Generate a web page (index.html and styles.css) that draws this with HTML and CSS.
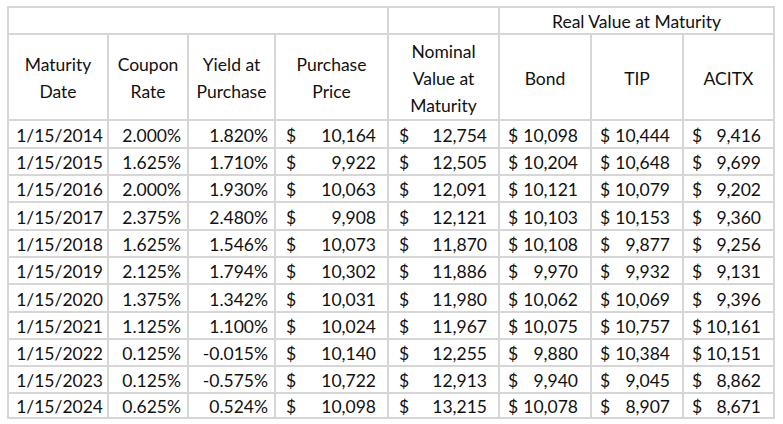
FILE: index.html
```html
<!DOCTYPE html>
<html>
<head>
<meta charset="utf-8">
<link rel="stylesheet" href="styles.css">
</head>
<body>
<div class="sheet">
  <div class="c span4"></div>
  <div class="c"></div>
  <div class="c span3 hd">Real Value at Maturity</div>

  <div class="c hd">Maturity<br>Date</div>
  <div class="c hd">Coupon<br>Rate</div>
  <div class="c hd">Yield at<br>Purchase</div>
  <div class="c hd">Purchase<br>Price</div>
  <div class="c hd">Nominal<br>Value at<br>Maturity</div>
  <div class="c hd">Bond</div>
  <div class="c hd">TIP</div>
  <div class="c hd">ACITX</div>

  <div class="c r d">1/15/2014</div><div class="c r">2.000%</div><div class="c r">1.820%</div><div class="c acc"><span>$</span><span>10,164</span></div><div class="c acc"><span>$</span><span>12,754</span></div><div class="c acc tight"><span>$</span><span>10,098</span></div><div class="c acc tight"><span>$</span><span>10,444</span></div><div class="c acc tight"><span>$</span><span>9,416</span></div>
  <div class="c r d">1/15/2015</div><div class="c r">1.625%</div><div class="c r">1.710%</div><div class="c acc"><span>$</span><span>9,922</span></div><div class="c acc"><span>$</span><span>12,505</span></div><div class="c acc tight"><span>$</span><span>10,204</span></div><div class="c acc tight"><span>$</span><span>10,648</span></div><div class="c acc tight"><span>$</span><span>9,699</span></div>
  <div class="c r d">1/15/2016</div><div class="c r">2.000%</div><div class="c r">1.930%</div><div class="c acc"><span>$</span><span>10,063</span></div><div class="c acc"><span>$</span><span>12,091</span></div><div class="c acc tight"><span>$</span><span>10,121</span></div><div class="c acc tight"><span>$</span><span>10,079</span></div><div class="c acc tight"><span>$</span><span>9,202</span></div>
  <div class="c r d">1/15/2017</div><div class="c r">2.375%</div><div class="c r">2.480%</div><div class="c acc"><span>$</span><span>9,908</span></div><div class="c acc"><span>$</span><span>12,121</span></div><div class="c acc tight"><span>$</span><span>10,103</span></div><div class="c acc tight"><span>$</span><span>10,153</span></div><div class="c acc tight"><span>$</span><span>9,360</span></div>
  <div class="c r d">1/15/2018</div><div class="c r">1.625%</div><div class="c r">1.546%</div><div class="c acc"><span>$</span><span>10,073</span></div><div class="c acc"><span>$</span><span>11,870</span></div><div class="c acc tight"><span>$</span><span>10,108</span></div><div class="c acc tight"><span>$</span><span>9,877</span></div><div class="c acc tight"><span>$</span><span>9,256</span></div>
  <div class="c r d">1/15/2019</div><div class="c r">2.125%</div><div class="c r">1.794%</div><div class="c acc"><span>$</span><span>10,302</span></div><div class="c acc"><span>$</span><span>11,886</span></div><div class="c acc tight"><span>$</span><span>9,970</span></div><div class="c acc tight"><span>$</span><span>9,932</span></div><div class="c acc tight"><span>$</span><span>9,131</span></div>
  <div class="c r d">1/15/2020</div><div class="c r">1.375%</div><div class="c r">1.342%</div><div class="c acc"><span>$</span><span>10,031</span></div><div class="c acc"><span>$</span><span>11,980</span></div><div class="c acc tight"><span>$</span><span>10,062</span></div><div class="c acc tight"><span>$</span><span>10,069</span></div><div class="c acc tight"><span>$</span><span>9,396</span></div>
  <div class="c r d">1/15/2021</div><div class="c r">1.125%</div><div class="c r">1.100%</div><div class="c acc"><span>$</span><span>10,024</span></div><div class="c acc"><span>$</span><span>11,967</span></div><div class="c acc tight"><span>$</span><span>10,075</span></div><div class="c acc tight"><span>$</span><span>10,757</span></div><div class="c acc tight"><span>$</span><span>10,161</span></div>
  <div class="c r d">1/15/2022</div><div class="c r">0.125%</div><div class="c r">-0.015%</div><div class="c acc"><span>$</span><span>10,140</span></div><div class="c acc"><span>$</span><span>12,255</span></div><div class="c acc tight"><span>$</span><span>9,880</span></div><div class="c acc tight"><span>$</span><span>10,384</span></div><div class="c acc tight"><span>$</span><span>10,151</span></div>
  <div class="c r d">1/15/2023</div><div class="c r">0.125%</div><div class="c r">-0.575%</div><div class="c acc"><span>$</span><span>10,722</span></div><div class="c acc"><span>$</span><span>12,913</span></div><div class="c acc tight"><span>$</span><span>9,940</span></div><div class="c acc tight"><span>$</span><span>9,045</span></div><div class="c acc tight"><span>$</span><span>8,862</span></div>
  <div class="c r d">1/15/2024</div><div class="c r">0.625%</div><div class="c r">0.524%</div><div class="c acc"><span>$</span><span>10,098</span></div><div class="c acc"><span>$</span><span>13,215</span></div><div class="c acc tight"><span>$</span><span>10,078</span></div><div class="c acc tight"><span>$</span><span>8,907</span></div><div class="c acc tight"><span>$</span><span>8,671</span></div>
</div>
</body>
</html>
```
FILE: styles.css
```css
html, body {
  margin: 0;
  padding: 0;
  background: #ffffff;
}
body {
  padding: 6px 0 0 7px;
  font-family: Lato, "Liberation Sans", sans-serif;
  font-size: 17.5px;
  color: #111111;
}
.sheet {
  display: grid;
  width: 768px;
  box-sizing: border-box;
  grid-template-columns: 98px 78px 85px 111px 109px 90px 90px 89px;
  grid-template-rows: 25px 84px 26px 25px 25px 26px 25px 25px 26px 25px 25px 25px 23px;
  gap: 2px;
  padding: 2px;
  background: #d6d6d6;
}
.c {
  background: #ffffff;
  display: flex;
  align-items: center;
  padding: 2px 6px 0 6px;
  line-height: 27px;
  white-space: nowrap;
  overflow: hidden;
}
.span4 { grid-column: span 4; }
.span3 { grid-column: span 3; }
.hd {
  justify-content: center;
  text-align: center;
}
.r {
  justify-content: flex-end;
}
.r.d {
  padding-right: 4px;
}
.acc {
  justify-content: space-between;
  padding: 2px 11px 0 10px;
}
.acc.tight {
  padding: 2px 12px 0 8px;
}
```
